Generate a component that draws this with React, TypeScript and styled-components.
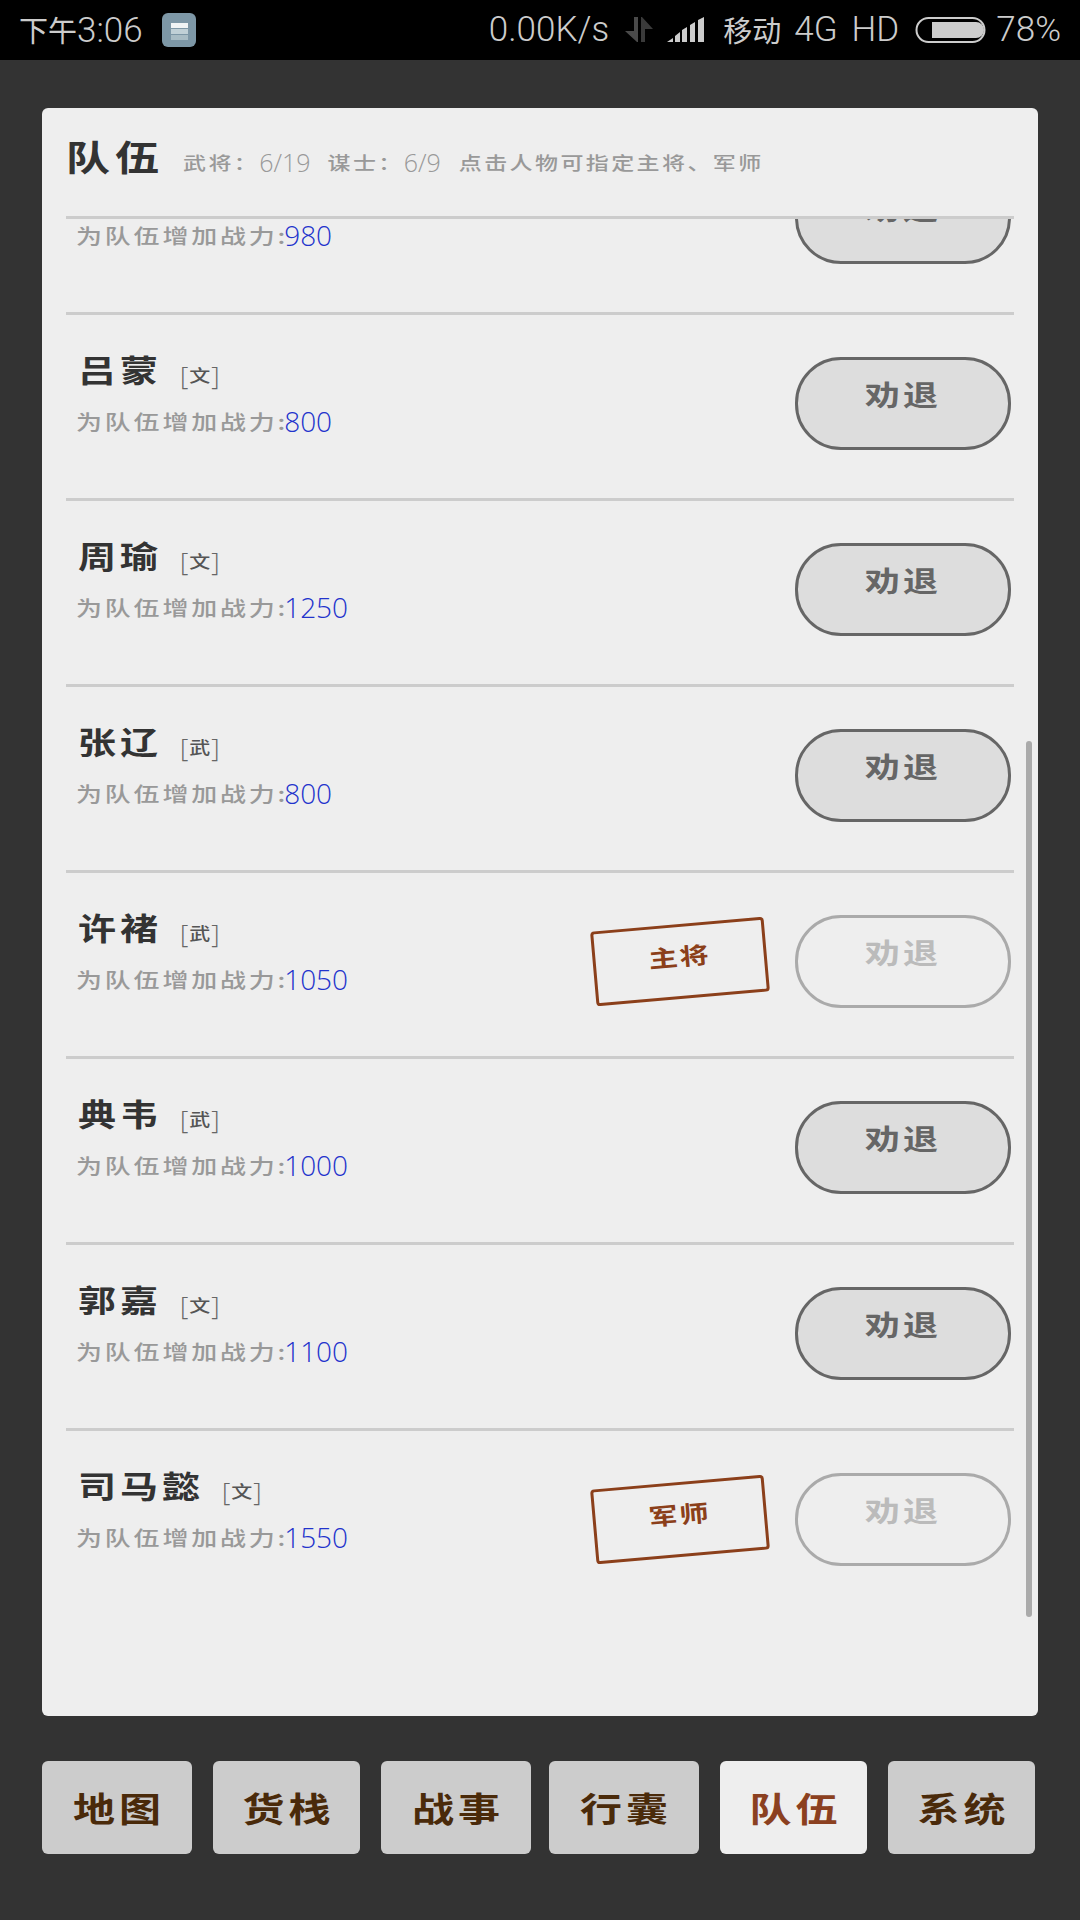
import React from "react";
import styled, { createGlobalStyle } from "styled-components";

const Global = createGlobalStyle`
  html, body { margin: 0; padding: 0; background: #333; }
  #root { width: 1080px; height: 1920px; }
  * { box-sizing: border-box; }
`;

const cjk = `"Noto Sans CJK SC", "Noto Sans CJK TC", sans-serif`;

const Screen = styled.div`
  width: 1080px;
  height: 1920px;
  background: #333;
  display: flex;
  flex-direction: column;
  overflow: hidden;
  font-family: ${cjk};
`;

const StatusBar = styled.div`
  height: 60px;
  background: #000;
  color: #ccc;
  display: flex;
  align-items: center;
  padding: 0 19px;
  font-family: Roboto, ${cjk};
  font-size: 35px;
  font-weight: 300;
`;
const StatusText = styled.span<{ $ml?: number }>`
  margin-left: ${(p) => p.$ml ?? 0}px;
  white-space: nowrap;
  line-height: 60px;
`;
const StatusCjk = styled.span`
  font-family: ${cjk};
  font-size: 29px;
  font-weight: 400;
`;
const StatusIcon = styled.svg<{ $ml: number }>`
  margin-left: ${(p) => p.$ml}px;
  flex: none;
`;
const Spacer = styled.div`
  flex: 1;
`;

const Panel = styled.section`
  position: relative;
  margin: 48px 42px 0;
  height: 1608px;
  background: #eee;
  border-radius: 6px;
  display: flex;
  flex-direction: column;
  overflow: hidden;
`;
const PanelHeader = styled.header`
  height: 111px;
  margin: 0 24px;
  flex: none;
  border-bottom: 3px solid #ccc;
  display: flex;
  align-items: flex-start;
  padding-top: 24px;
  white-space: nowrap;
`;
const Squash = styled.span<{ $y?: number }>`
  display: inline-block;
  transform: scaleY(${(p) => p.$y ?? 0.8});
`;
const PanelTitle = styled(Squash)`
  font-size: 44px;
  line-height: 50px;
  font-weight: 700;
  letter-spacing: 5px;
  color: #333;
  margin-top: -1px;
`;
const SubLabel = styled(Squash)<{ $ml: number }>`
  font-size: 23px;
  line-height: 32px;
  font-weight: 500;
  color: #999;
  margin: 14px 0 0 ${(p) => p.$ml}px;
  letter-spacing: 2.4px;
`;
const SubCount = styled.span`
  font-family: "Open Sans", sans-serif;
  font-weight: 300;
  font-size: 25px;
  line-height: 32px;
  color: #999;
  margin-top: 14px;
`;

const Viewport = styled.div`
  flex: 1;
  overflow: hidden;
  margin: 0 24px;
`;
const List = styled.div`
  margin-top: -90px;
`;
const Row = styled.div<{ $last?: boolean }>`
  height: ${(p) => (p.$last ? 183 : 186)}px;
  border-bottom: ${(p) => (p.$last ? "0" : "3px solid #ccc")};
  display: flex;
  align-items: flex-start;
  padding: 42px 3px 0 12px;
`;
const Info = styled.div`
  flex: 1;
  display: flex;
  flex-direction: column;
`;
const NameLine = styled.div`
  display: flex;
  align-items: center;
  height: 38px;
  margin-top: -7px;
`;
const Name = styled(Squash)`
  font-size: 38px;
  line-height: 38px;
  font-weight: 700;
  letter-spacing: 4px;
  color: #333;
  white-space: nowrap;
`;
const Tag = styled.span`
  display: inline-flex;
  align-items: center;
  margin: 12px 0 0 18px;
  font-family: "Open Sans", sans-serif;
  font-weight: 300;
  font-size: 26px;
  color: #666;
  line-height: 30px;
`;
const TagChar = styled(Squash)`
  font-family: ${cjk};
  font-size: 21px;
  font-weight: 500;
  color: #555;
  margin: 0 1px;
`;
const Power = styled.div`
  display: flex;
  align-items: baseline;
  margin: 14px 0 0 -2px;
  height: 38px;
`;
const PowerLabel = styled(Squash)`
  font-size: 26px;
  line-height: 38px;
  font-weight: 500;
  color: #999;
  letter-spacing: 2.8px;
`;
const PowerValue = styled.span`
  font-family: "Open Sans", sans-serif;
  font-weight: 300;
  font-size: 28px;
  line-height: 38px;
  color: #2233cc;
  margin-left: -4px;
`;
const Stamp = styled.div`
  width: 174px;
  height: 75px;
  margin: 9px 28px 0 0;
  border: 3px solid #8b3f1a;
  border-radius: 4px;
  transform: rotate(-5deg);
  display: flex;
  align-items: center;
  justify-content: center;
  padding-bottom: 14px;
  color: #8b3f1a;
`;
const StampText = styled(Squash)`
  font-size: 29px;
  line-height: 32px;
  font-weight: 700;
  letter-spacing: 2px;
`;
const DismissButton = styled.button<{ $disabled?: boolean }>`
  width: 216px;
  height: 93px;
  flex: none;
  border-radius: 46px;
  border: 3px solid ${(p) => (p.$disabled ? "#aaa" : "#666")};
  background: ${(p) => (p.$disabled ? "transparent" : "#ddd")};
  color: ${(p) => (p.$disabled ? "#bbb" : "#666")};
  font-family: ${cjk};
  padding: 0 0 19px;
  display: flex;
  align-items: center;
  justify-content: center;
`;
const DismissLabel = styled(Squash)`
  font-size: 35px;
  line-height: 40px;
  font-weight: 700;
  letter-spacing: 3px;
`;
const ScrollThumb = styled.div`
  position: absolute;
  left: 984px;
  top: 633px;
  width: 6px;
  height: 876px;
  border-radius: 3px;
  background: #aaa;
`;

const TabBar = styled.nav`
  display: flex;
  margin: 45px 0 0 42px;
`;
const Tab = styled.div<{ $w: number; $gap: number; $active?: boolean }>`
  width: ${(p) => p.$w}px;
  margin-right: ${(p) => p.$gap}px;
  height: 93px;
  border-radius: 6px;
  background: ${(p) => (p.$active ? "#eee" : "#ccc")};
  color: ${(p) => (p.$active ? "#8b4020" : "#4a2a0a")};
  display: flex;
  align-items: center;
  justify-content: center;
`;
const TabLabel = styled(Squash)`
  font-size: 42px;
  line-height: 50px;
  font-weight: 700;
  letter-spacing: 4px;
  margin-right: -4px;
`;

const rows = [
  { name: "", kind: "", power: 980 },
  { name: "吕蒙", kind: "文", power: 800 },
  { name: "周瑜", kind: "文", power: 1250 },
  { name: "张辽", kind: "武", power: 800 },
  { name: "许褚", kind: "武", power: 1050, stamp: "主将" },
  { name: "典韦", kind: "武", power: 1000 },
  { name: "郭嘉", kind: "文", power: 1100 },
  { name: "司马懿", kind: "文", power: 1550, stamp: "军师" },
];

const tabs = [
  { label: "地图", w: 150, gap: 21 },
  { label: "货栈", w: 147, gap: 21 },
  { label: "战事", w: 150, gap: 18 },
  { label: "行囊", w: 150, gap: 21 },
  { label: "队伍", w: 147, gap: 21, active: true },
  { label: "系统", w: 147, gap: 0 },
];

export default function App() {
  return (
    <Screen>
      <Global />
      <StatusBar>
        <StatusText>
          <StatusCjk>下午</StatusCjk>3:06
        </StatusText>
        <StatusIcon $ml={19} width="34" height="34" viewBox="0 0 34 34">
          <rect width="34" height="34" rx="6" fill="#7d97a6" />
          <rect x="9" y="10" width="17" height="5" fill="#f0f4f5" />
          <rect x="9" y="16" width="17" height="5" fill="#c0d0d6" />
          <rect x="9" y="22" width="17" height="5" fill="#a8bcc4" />
        </StatusIcon>
        <Spacer />
        <StatusText>0.00K/s</StatusText>
        <StatusIcon $ml={16} width="28" height="26" viewBox="0 0 28 26">
          <path d="M9 0h4v25h-1L0 14h9z" fill="#4a4a4a" />
          <path d="M16 25V0h1l11 12h-8v13z" fill="#3a3a3a" />
        </StatusIcon>
        <StatusIcon $ml={14} width="38" height="26" viewBox="0 0 38 26">
          <path d="M0 25l6-4v4zM8 25v-6l5-4v10zM15 25V13l5-3v15zM23 25V8l5-3v20zM31 25V3l6-3v25z" fill="#ccc" />
        </StatusIcon>
        <StatusText $ml={18}>
          <StatusCjk>移动</StatusCjk>
        </StatusText>
        <StatusText $ml={13}>4G</StatusText>
        <StatusText $ml={14}>HD</StatusText>
        <StatusIcon $ml={16} width="72" height="28" viewBox="0 0 72 28">
          <rect x="1.5" y="2" width="68" height="24" rx="12" fill="none" stroke="#ccc" strokeWidth="2" />
          <path d="M17 6h44a8 8 0 0 1 0 16H17z" fill="#ccc" />
        </StatusIcon>
        <StatusText $ml={9}>78%</StatusText>
      </StatusBar>

      <Panel>
        <PanelHeader>
          <PanelTitle>队伍</PanelTitle>
          <SubLabel $ml={19}>武将：</SubLabel>
          <SubCount>6/19</SubCount>
          <SubLabel $ml={17}>谋士：</SubLabel>
          <SubCount>6/9</SubCount>
          <SubLabel $ml={18}>点击人物可指定主将、军师</SubLabel>
        </PanelHeader>
        <Viewport>
          <List>
            {rows.map((r, i) => (
              <Row key={i} $last={i === rows.length - 1}>
                <Info>
                  <NameLine>
                    <Name>{r.name}</Name>
                    {r.kind && (
                      <Tag>
                        [<TagChar>{r.kind}</TagChar>]
                      </Tag>
                    )}
                  </NameLine>
                  <Power>
                    <PowerLabel>为队伍增加战力:</PowerLabel>
                    <PowerValue>{r.power}</PowerValue>
                  </Power>
                </Info>
                {r.stamp && (
                  <Stamp>
                    <StampText>{r.stamp}</StampText>
                  </Stamp>
                )}
                <DismissButton $disabled={!!r.stamp}>
                  <DismissLabel>劝退</DismissLabel>
                </DismissButton>
              </Row>
            ))}
          </List>
        </Viewport>
        <ScrollThumb />
      </Panel>

      <TabBar>
        {tabs.map((t) => (
          <Tab key={t.label} $w={t.w} $gap={t.gap} $active={t.active}>
            <TabLabel>{t.label}</TabLabel>
          </Tab>
        ))}
      </TabBar>
    </Screen>
  );
}
